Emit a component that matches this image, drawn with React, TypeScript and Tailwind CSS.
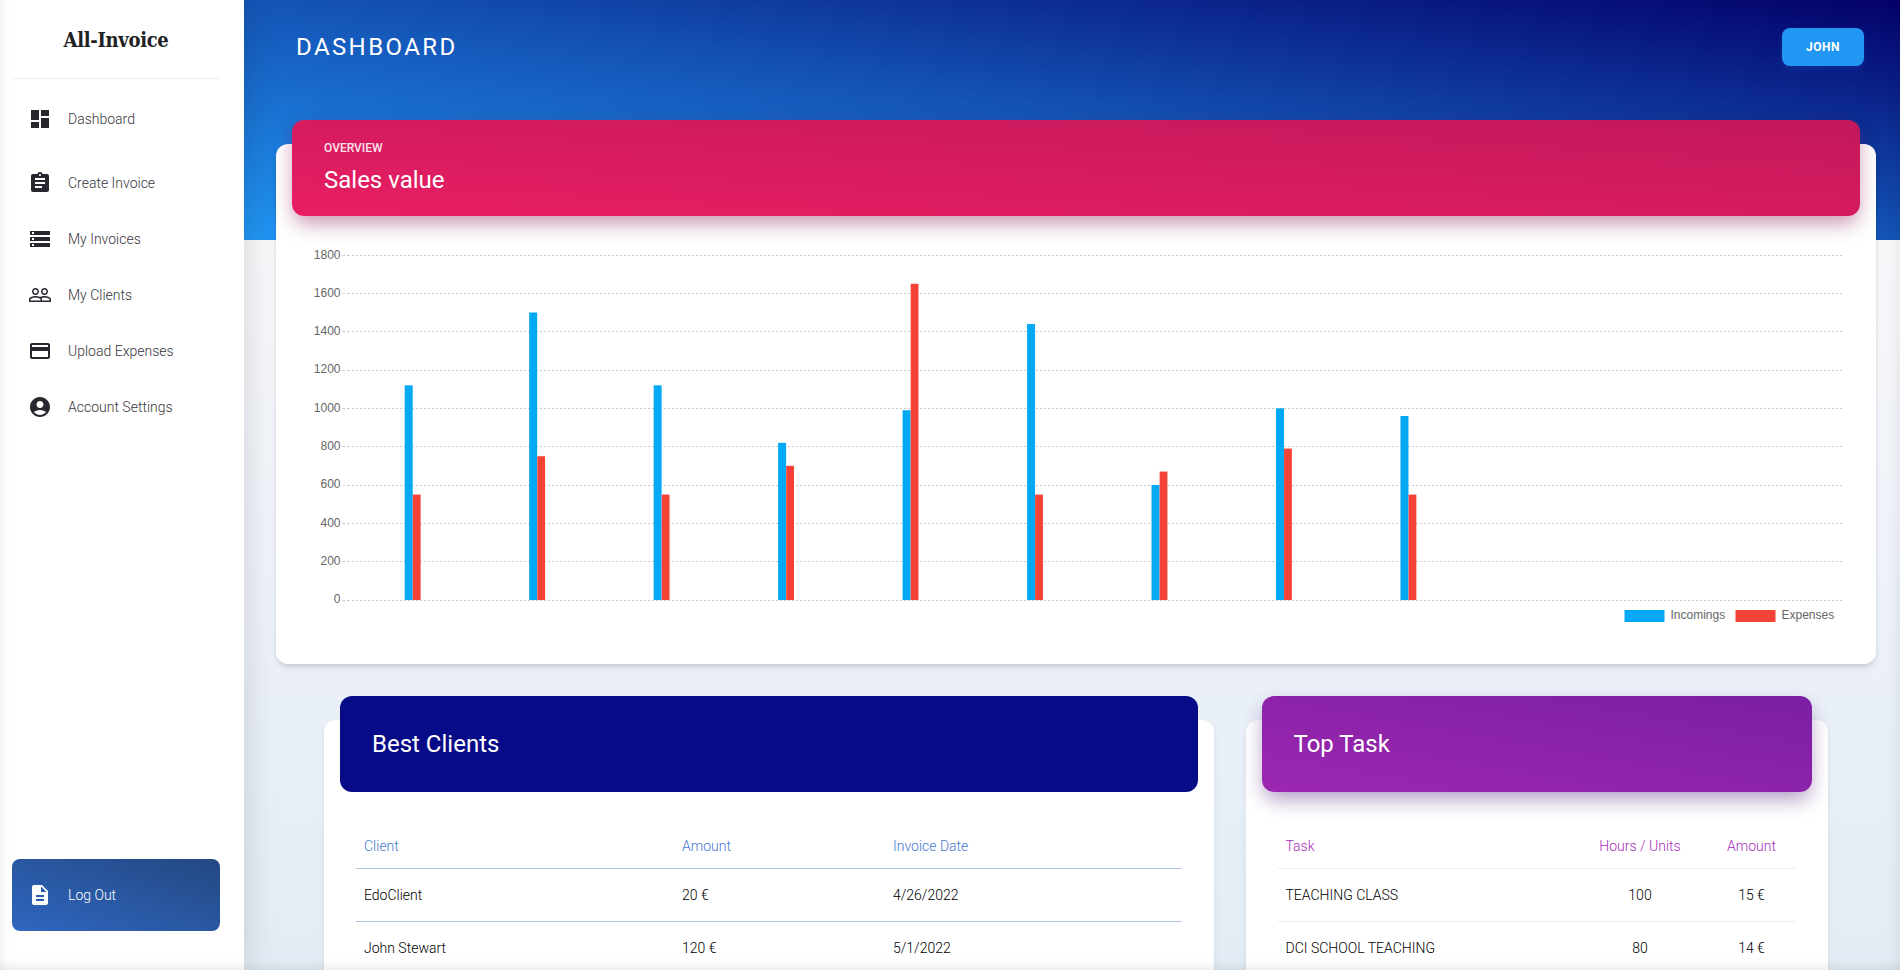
import React from "react";
import {
  MdDashboard,
  MdAssignment,
  MdStorage,
  MdPeopleOutline,
  MdCreditCard,
  MdAccountCircle,
  MdDescription,
} from "react-icons/md";

const nav = [
  { label: "Dashboard", Icon: MdDashboard, cls: "mb-4" },
  { label: "Create Invoice", Icon: MdAssignment, cls: "mb-2" },
  { label: "My Invoices", Icon: MdStorage, cls: "mb-2" },
  { label: "My Clients", Icon: MdPeopleOutline, cls: "mb-2" },
  { label: "Upload Expenses", Icon: MdCreditCard, cls: "mb-2" },
  { label: "Account Settings", Icon: MdAccountCircle, cls: "mb-2" },
];

const sales: [number, number][] = [
  [1120, 550],
  [1500, 750],
  [1120, 550],
  [820, 700],
  [990, 1650],
  [1440, 550],
  [600, 670],
  [1000, 790],
  [960, 550],
];

const ticks = [1800, 1600, 1400, 1200, 1000, 800, 600, 400, 200, 0];

const CHART_TOP = 7;
const CHART_HEIGHT = 345;
const barY = (v: number) => CHART_TOP + CHART_HEIGHT * (1 - v / 1800);

function SalesChart() {
  return (
    <svg
      width="1536"
      height="384"
      viewBox="0 0 1536 384"
      className="block"
      fontFamily="'Liberation Sans', sans-serif"
      fontSize="12"
      fill="#666"
    >
      {ticks.map((t, i) => {
        const pos = CHART_TOP + (CHART_HEIGHT / 9) * i;
        const y = Math.floor(pos + 0.01) + 0.5;
        return (
          <g key={t}>
            <text x="32.5" y={Math.floor(pos - 0.1 + (i === 0 ? 0.2 : 0)) + 4} textAnchor="end">
              {t}
            </text>
            <path d={`M34.5 ${y}h2.5m2 0h2.5`} stroke="#c9c9c9" fill="none" />
            <path d={`M44 ${y}H1534`} stroke="#c9c9c9" strokeDasharray="2" fill="none" />
          </g>
        );
      })}
      {sales.map(([a, b], i) => {
        const c = 104.8 + i * 124.47;
        return (
          <g key={i}>
            <rect x={c - 8.1} y={barY(a)} width="8" height={CHART_TOP + CHART_HEIGHT - barY(a)} fill="#03a9f4" />
            <rect x={c} y={barY(b)} width="7.8" height={CHART_TOP + CHART_HEIGHT - barY(b)} fill="#f44336" />
          </g>
        );
      })}
      <rect x="1316.5" y="362" width="40" height="12" fill="#03a9f4" />
      <text x="1362.5" y="371">Incomings</text>
      <rect x="1427.5" y="362" width="40" height="12" fill="#f44336" />
      <text x="1473.5" y="371">Expenses</text>
    </svg>
  );
}

function Sidebar() {
  return (
    <aside className="relative z-10 flex h-[970px] w-[244px] shrink-0 flex-col bg-white px-3 shadow-[0_0_32px_rgba(0,0,0,0.15)]">
      <h1 className="mr-3 flex h-[79px] items-center justify-center border-b border-[#eceeef] pt-0.5 font-['Roboto_Slab','DejaVu_Serif_Condensed',serif] text-xl font-bold tracking-[-0.3px] text-[#212121]">
        All-Invoice
      </h1>
      <nav className="mt-4 mr-2 flex flex-1 flex-col">
        {nav.map(({ label, Icon, cls }) => (
          <a key={label} className={`flex h-12 items-center px-4 text-[#2a2630] ${cls}`}>
            <Icon size={24} />
            <span className="ml-4 text-sm font-light text-[#38343c]">{label}</span>
          </a>
        ))}
      </nav>
      <a className="mr-3 mb-[39px] flex h-[72px] items-center rounded-lg bg-[linear-gradient(to_bottom_left,#234882,#2f66c0)] px-4 text-white">
        <MdDescription size={24} />
        <span className="ml-4 text-sm font-light">Log Out</span>
      </a>
    </aside>
  );
}

export default function App() {
  return (
    <div className="relative flex h-[970px] w-[1900px] overflow-hidden bg-[linear-gradient(180deg,#ffffff_0px,#f7f8fa_250px,#edf1f9_620px,#e6eef6_820px,#e3ecf4_970px)] font-['Roboto',sans-serif] text-[#212121]">
      <Sidebar />
      <main className="flex h-[970px] flex-1 flex-col">
        <div className="h-[240px] shrink-0 bg-[linear-gradient(to_bottom_left,#04006a,#1455b7_50%,#2196f3)] pr-9 pl-[52px]">
          <header className="flex h-[94px] items-center justify-between">
            <h2 className="text-2xl tracking-[2.4px] text-white">DASHBOARD</h2>
            <button className="h-[38px] w-[82px] rounded-lg bg-[#2196f3] text-xs font-bold tracking-[0.5px] text-white shadow-[0_3px_6px_rgba(33,150,243,0.15)]">
              JOHN
            </button>
          </header>
        </div>
        <section className="-mt-24 mr-6 ml-8 h-[520px] shrink-0 rounded-xl bg-white px-4 shadow-[0_4px_6px_-1px_rgba(0,0,0,0.12),0_2px_4px_-1px_rgba(0,0,0,0.07)]">
          <div className="-mt-6 h-24 rounded-xl bg-[linear-gradient(to_bottom_left,#c2185b,#e91e63)] px-8 pt-5 text-white shadow-[0_10px_20px_-3px_rgba(136,14,79,0.4),0_4px_24px_rgba(136,14,79,0.08)]">
            <p className="text-xs leading-4 font-medium text-[#fbe3ec]">OVERVIEW</p>
            <h3 className="mt-2 text-2xl leading-8">Sales value</h3>
          </div>
          <div className="pt-8 pl-4">
            <SalesChart />
          </div>
        </section>
        <div className="mt-14 ml-20 flex flex-1 gap-8">
          <section className="h-[360px] w-[889.5px] rounded-xl bg-white px-4 shadow-[0_4px_6px_-1px_rgba(0,0,0,0.1)]">
            <div className="-mt-6 flex h-24 items-center rounded-xl bg-[#070b88] px-8 text-white">
              <h3 className="text-2xl">Best Clients</h3>
            </div>
            <div className="mx-4 pt-[31px] text-sm font-light">
              <div className="grid h-[46px] grid-cols-[318px_211px_1fr] items-center border-b border-[#b3c4e3] px-2 text-[#4677cf]">
                <span>Client</span>
                <span>Amount</span>
                <span>Invoice Date</span>
              </div>
              <div className="grid h-[53px] grid-cols-[318px_211px_1fr] items-center border-b border-[#b3c4e3] px-2 text-black">
                <span>EdoClient</span>
                <span>20 €</span>
                <span>4/26/2022</span>
              </div>
              <div className="grid h-[53px] grid-cols-[318px_211px_1fr] items-center border-b border-[#b3c4e3] px-2 text-black">
                <span>John Stewart</span>
                <span>120 €</span>
                <span>5/1/2022</span>
              </div>
            </div>
          </section>
          <section className="h-[360px] w-[582.5px] rounded-xl bg-white px-4 shadow-[0_4px_6px_-1px_rgba(0,0,0,0.1)]">
            <div className="-mt-6 flex h-24 items-center rounded-xl bg-[linear-gradient(to_bottom_left,#7b1fa2,#9c27b0)] px-8 text-white shadow-[0_10px_20px_-3px_rgba(74,20,120,0.4),0_4px_24px_rgba(74,20,120,0.06)]">
              <h3 className="text-2xl">Top Task</h3>
            </div>
            <div className="mx-4 pt-[31px] text-sm font-light">
              <div className="grid h-[46px] grid-cols-[298px_129px_94px] items-center border-b border-[#ebedee] text-center text-[#a62cba]">
                <span className="pl-2 text-left">Task</span>
                <span>Hours / Units</span>
                <span>Amount</span>
              </div>
              <div className="grid h-[53px] grid-cols-[298px_129px_94px] items-center border-b border-[#ebedee] text-center text-black">
                <span className="pl-2 text-left">TEACHING CLASS</span>
                <span>100</span>
                <span>15 €</span>
              </div>
              <div className="grid h-[53px] grid-cols-[298px_129px_94px] items-center border-b border-[#ebedee] text-center text-black">
                <span className="pl-2 text-left">DCI SCHOOL TEACHING</span>
                <span>80</span>
                <span>14 €</span>
              </div>
            </div>
          </section>
        </div>
      </main>
      <div className="pointer-events-none absolute inset-0 z-20 shadow-[inset_0_-12px_12px_-10px_rgba(0,0,0,0.1),inset_14px_0_14px_-14px_rgba(0,0,0,0.08),inset_-14px_0_14px_-12px_rgba(0,0,0,0.08)]" />
    </div>
  );
}
